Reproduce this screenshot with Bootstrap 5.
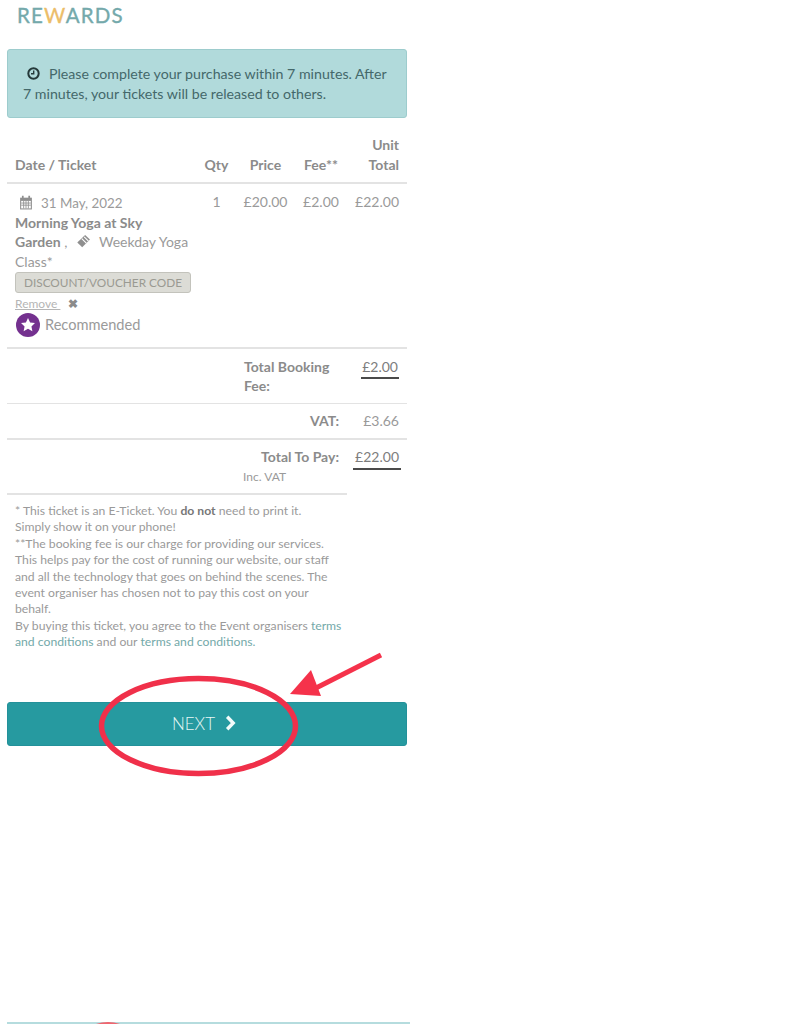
<!DOCTYPE html>
<html lang="en">
<head>
    <meta charset="UTF-8">
    <meta name="viewport" content="width=device-width, initial-scale=1.0">
    <title>Checkout</title>
    <link href="https://cdn.jsdelivr.net/npm/bootstrap@5.3.3/dist/css/bootstrap.min.css" rel="stylesheet">
    <style>
        body {
            font-family: Lato, "Liberation Sans", sans-serif;
            font-size: 14px;
            color: #9a9a9a;
            background: #fff;
            min-height: 1024px;
            overflow: hidden;
        }
        .page-wrap { width: 400px; margin-left: 7px; }
        .logo-text {
            font-size: 20.5px;
            line-height: 22px;
            letter-spacing: 1.2px;
            font-weight: 400;
            -webkit-text-stroke: .35px currentColor;
            color: #74a9ab;
            padding: 4px 0 0 10px;
            height: 49px;
        }
        .logo-text span { color: #ecbd68; }
        .notice-box {
            background: #b1dadb;
            border: 1px solid #9dcccd;
            border-radius: 3px;
            color: #44686a;
            height: 69px;
            padding: 14px 15px 0;
            font-size: 14.2px;
            line-height: 20px;
            margin-bottom: 17px;
        }
        .notice-box svg { margin: 0 9px 0 4px; vertical-align: -1px; }
        .ticket-table { table-layout: fixed; width: 400px; margin: 0; }
        .ticket-table th, .ticket-table td {
            padding: 0 8px;
            border: 0;
            color: #9a9a9a;
            font-size: 14px;
            line-height: 19.5px;
            background: transparent;
        }
        .ticket-table thead th { color: #8b8b8b; font-weight: 700; vertical-align: bottom; padding-bottom: 8px; border-bottom: 2px solid #e3e3e3; height: 48px; }
        .ticket-table tbody td { padding-top: 8px; padding-bottom: 10px; vertical-align: top; border-bottom: 2px solid #e3e3e3; }
        .col-ticket { width: 190px; }
        .col-qty { width: 39px; }
        .col-price { width: 59px; }
        .col-fee { width: 52px; }
        .col-unit { width: 60px; }
        .ticket-date { font-size: 13.4px; padding-top: 2px; margin-bottom: -1px; }
        .ticket-date svg { margin: 0 8px 0 4px; vertical-align: -2px; }
        .ticket-name { font-weight: 700; color: #8b8b8b; }
        .ticket-icon { margin: 0 8px 0 5px; vertical-align: -1px; }
        .voucher-btn {
            display: block;
            width: 176px;
            height: 21px;
            margin-top: 1px;
            padding: 0;
            background: #dcdcd6;
            border: 1px solid #c3c3bc;
            border-radius: 3px;
            color: #9a9a92;
            font-size: 11.8px;
            line-height: 19px;
            text-align: center;
        }
        .remove-line { font-size: 12px; line-height: 16px; margin-top: 3px; color: #aaa; }
        .remove-line u { color: #b5b5b5; }
        .remove-line b { color: #8b8b8b; font-size: 12px; margin-left: 5px; }
        .recommend-line { height: 24px; margin-top: 1px; margin-left: 1px; gap: 5px; font-size: 14.6px; }
        .summary-row { display: flex; border-bottom: 1px solid #e3e3e3; line-height: 19.5px; }
        .summary-label { width: 339px; padding-right: 7px; font-weight: 700; text-align: right; flex: none; color: #8b8b8b; }
        .summary-value { flex: 1; text-align: right; padding-right: 8px; }
        .fee-row { height: 55px; padding-top: 8px; }
        .fee-row .summary-label { padding-left: 237px; padding-right: 0; text-align: left; line-height: 19px; }
        .vat-row { height: 36px; padding-top: 7px; border-bottom-width: 2px; }
        .pay-row { height: 55px; padding-top: 7px; width: 340px; border-bottom-width: 2px; }
        .underlined { display: inline-block; border-bottom: 2px solid #4a4a4a; padding: 0 1px 1px; line-height: 18px; color: #7d7d7d; }
        .pay-value { width: 60px; text-align: right; flex: none; margin-right: -60px; padding-right: 5px; }
        .pay-value .underlined { padding: 0 2px 2px; }
        .inc-note { font-weight: 400; color: #9a9a9a; font-size: 12px; line-height: 20px; text-align: left; padding-left: 236px; }
        .small-print { font-size: 12.2px; line-height: 16.4px; padding: 8px 64px 0 8px; height: 207px; }
        .small-print b { color: #777; }
        .small-print a { color: #73a9a9; text-decoration: none; }
        .next-btn {
            display: block;
            width: 100%;
            height: 44px;
            background: #269aa0;
            border: 1px solid #23919a;
            border-radius: 3px;
            color: #e6f7f5;
            font-size: 17px;
            font-weight: 300;
            padding: 0 6px 0 0;
        }
        .next-btn:hover { background: #269aa0; color: #e6f7f5; }
        .next-btn svg { margin-left: 6px; vertical-align: -1px; }
        .next-shot-edge { width: 403px; margin-top: 276px; height: 2px; background: #b5dcde; }
        .markup-layer { position: absolute; left: 0; top: 0; pointer-events: none; }
    </style>
</head>
<body>
<div class="page-wrap">
    <div class="logo-text">RE<span>W</span>ARDS</div>

    <div class="notice-box">
        <svg width="13" height="13" viewBox="0 0 13 13"><circle cx="6.5" cy="6.5" r="5.2" fill="none" stroke="#25393a" stroke-width="2"/><path d="M6.7 3.4v3.4H4" fill="none" stroke="#25393a" stroke-width="1.4"/></svg>Please complete your purchase within 7 minutes. After 7 minutes, your tickets will be released to others.
    </div>

    <table class="table ticket-table">
        <colgroup>
            <col class="col-ticket"><col class="col-qty"><col class="col-price"><col class="col-fee"><col class="col-unit">
        </colgroup>
        <thead>
            <tr>
                <th>Date / Ticket</th>
                <th class="text-center px-0">Qty</th>
                <th class="text-center px-0">Price</th>
                <th class="text-center px-0">Fee**</th>
                <th class="text-end">Unit Total</th>
            </tr>
        </thead>
        <tbody>
            <tr>
                <td>
                    <div class="ticket-date">
                        <svg width="14" height="15" viewBox="0 0 13 14"><path d="M1 2.5h11v11H1z" fill="#8f8f8f"/><path d="M2 5.5h9v7H2z" fill="#fff"/><path d="M2 7.5h9M2 9.5h9M4.3 5.5v7M6.5 5.5v7M8.7 5.5v7" stroke="#8f8f8f" stroke-width=".8"/><path d="M3.5 .8v3M9.5 .8v3" stroke="#8f8f8f" stroke-width="1.6"/></svg>31 May, 2022
                    </div>
                    <span class="ticket-name">Morning Yoga at Sky Garden</span> ,
                    <svg class="ticket-icon" width="15" height="14" viewBox="0 0 14 13"><path d="M8.5 .8 13 5.2 5.8 12.4 1.2 8z" fill="#8f8f8f"/><path d="M5.4 4.2 9.6 8.4M7.6 2.6l4 4" stroke="#fff" stroke-width="1"/></svg>Weekday Yoga Class*
                    <button type="button" class="voucher-btn">DISCOUNT/VOUCHER CODE</button>
                    <div class="remove-line"><u>Remove&nbsp;</u> <b>&#10006;</b></div>
                    <div class="recommend-line d-flex align-items-center">
                        <svg width="24" height="24" viewBox="0 0 23 23"><circle cx="11.5" cy="11.5" r="11.5" fill="#74318f"/><path d="M11.5 4.8l2 4.3 4.7.6-3.4 3.2.9 4.6-4.2-2.3-4.2 2.3.9-4.6-3.4-3.2 4.7-.6z" fill="#fff"/></svg>
                        <span>Recommended</span>
                    </div>
                </td>
                <td class="text-center px-0">1</td>
                <td class="text-center px-0">£20.00</td>
                <td class="text-center px-0">£2.00</td>
                <td class="text-end">£22.00</td>
            </tr>
        </tbody>
    </table>

    <div class="summary-row fee-row">
        <div class="summary-label">Total Booking Fee:</div>
        <div class="summary-value"><span class="underlined">£2.00</span></div>
    </div>
    <div class="summary-row vat-row">
        <div class="summary-label">VAT:</div>
        <div class="summary-value">£3.66</div>
    </div>
    <div class="summary-row pay-row">
        <div class="summary-label">Total To Pay:<div class="inc-note">Inc. VAT</div></div>
        <div class="pay-value"><span class="underlined">£22.00</span></div>
    </div>

    <div class="small-print">
        * This ticket is an E-Ticket. You <b>do not</b> need to print it.<br>Simply show it on your phone!<br>
        **The booking fee is our charge for providing our services. This helps pay for the cost of running our website, our staff and all the technology that goes on behind the scenes. The event organiser has chosen not to pay this cost on your behalf.<br>
        By buying this ticket, you agree to the Event organisers <a href="#">terms and conditions</a> and our <a href="#">terms and conditions.</a>
    </div>

    <button type="button" class="btn next-btn">NEXT
        <svg width="11" height="16" viewBox="0 0 11 16"><path d="M2.2 1.8 8.2 8l-6 6.2" fill="none" stroke="#f2fbfa" stroke-width="3.4"/></svg>
    </button>

    <div class="next-shot-edge"></div>
</div>

<!-- red annotation drawn over the screenshot -->
<svg class="markup-layer" width="796" height="1024" viewBox="0 0 796 1024">
    <ellipse cx="198.5" cy="726" rx="97" ry="47.5" fill="none" stroke="#f0304a" stroke-width="5.5"/>
    <path d="M381 655 316 688" stroke="#f5324b" stroke-width="5"/>
    <path d="M311 670 290 694 321 696z" fill="#f5324b"/>
    <path d="M96 1024q12-4 24 0z" fill="#f0656f"/>
</svg>
</body>
</html>
